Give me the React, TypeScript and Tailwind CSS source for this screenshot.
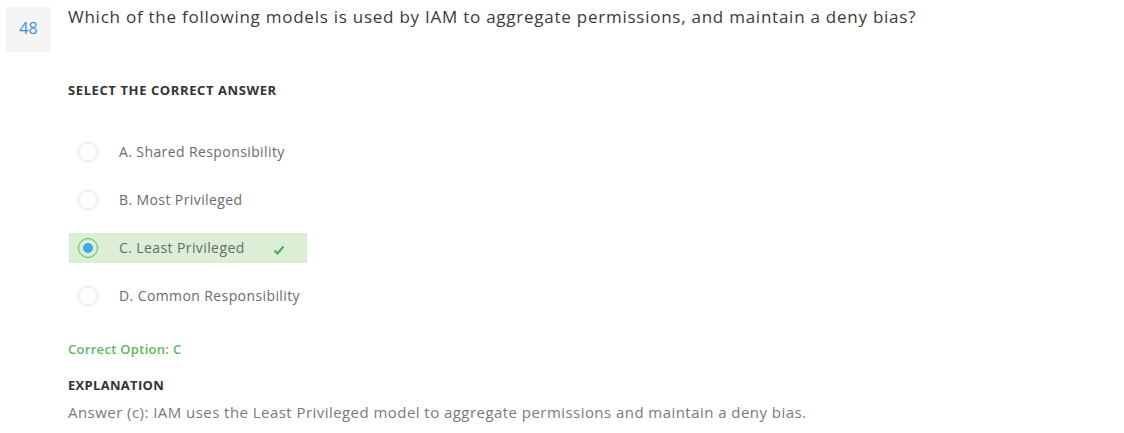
import React from "react";

const options = [
  { label: "A. Shared Responsibility", selected: false },
  { label: "B. Most Privileged", selected: false },
  { label: "C. Least Privileged", selected: true },
  { label: "D. Common Responsibility", selected: false },
];

export default function App() {
  return (
    <div className="w-[1124px] h-[433px] bg-white overflow-hidden" style={{ fontFamily: '"Open Sans", sans-serif' }}>
      <div className="flex pt-[7px] pl-[6px]">
        <div className="w-[45px] h-[45px] bg-[#f5f5f5] flex items-center justify-center pb-[3px] text-[16px] text-[#3d8fd8] shrink-0">
          48
        </div>
        <div className="ml-[17px] flex-1">
          <div className="text-[17px] text-[#3a3a3a] leading-[20px] mt-[0px] tracking-[0.75px]">
            Which of the following models is used by IAM to aggregate permissions, and maintain a deny bias?
          </div>
          <div className="mt-[55px] text-[13px] font-bold text-[#333] leading-[16px] tracking-[0.6px]">SELECT THE CORRECT ANSWER</div>
          <div className="mt-[39px] flex flex-col gap-[18px]">
            {options.map((o) => (
              <div
                key={o.label}
                className={`flex items-center h-[30px] w-[238px] ml-[1px] ${o.selected ? "bg-[#dbeed6]" : ""}`}
              >
                <div
                  className={`ml-[9px] w-[20px] h-[20px] rounded-full border flex items-center justify-center ${
                    o.selected ? "border-[#5cb85c]" : "border-[#e0e0e0]"
                  }`}
                >
                  {o.selected && <div className="w-[10px] h-[10px] rounded-full bg-[#3ca9e8]" />}
                </div>
                <div className="ml-[21px] pb-[2px] text-[14px] text-[#6b6b6b] tracking-[0.4px]">{o.label}</div>
                {o.selected && (
                  <svg className="ml-[28px] mt-[4px]" width="12" height="10" viewBox="0 0 12 10">
                    <path d="M1.5 5.5 L4.5 8.5 L10.5 1.5" fill="none" stroke="#4cae4c" strokeWidth="2" />
                  </svg>
                )}
              </div>
            ))}
          </div>
          <div className="mt-[29px] text-[13px] font-semibold text-[#5cb85c] tracking-[0.3px]">Correct Option: C</div>
          <div className="mt-[16px] text-[13px] font-bold text-[#333] tracking-[0.3px]">EXPLANATION</div>
          <div className="mt-[6px] text-[15px] text-[#7a7a7a] tracking-[0.45px]">
            Answer (c): IAM uses the Least Privileged model to aggregate permissions and maintain a deny bias.
          </div>
        </div>
      </div>
    </div>
  );
}
